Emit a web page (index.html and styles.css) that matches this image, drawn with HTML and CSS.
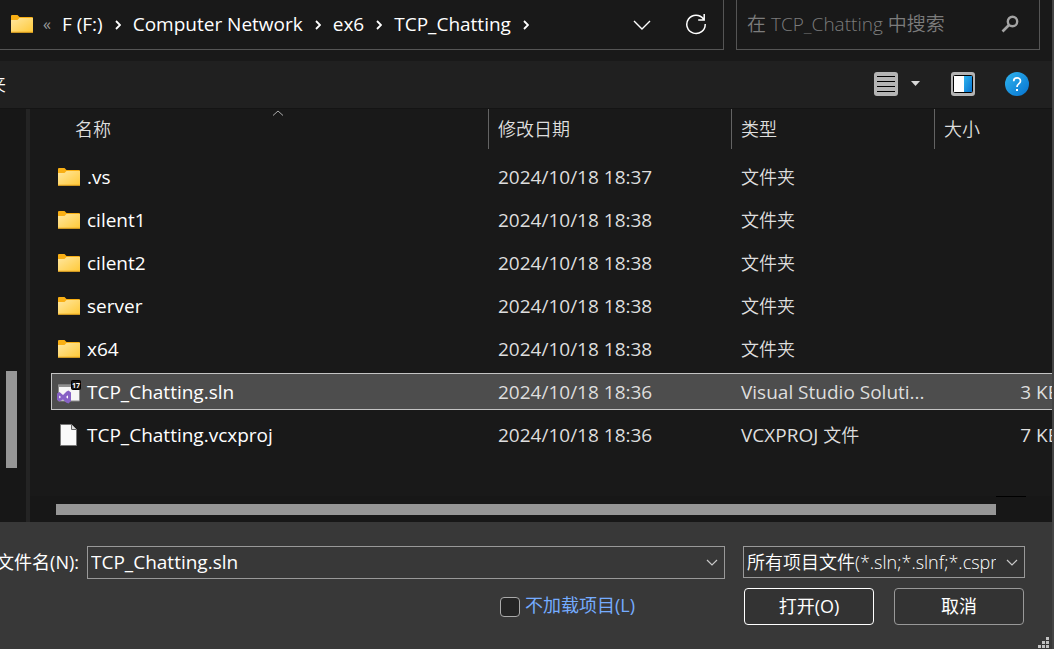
FILE: index.html
```html
<!DOCTYPE html>
<html lang="zh-CN">
<head>
<meta charset="utf-8">
<title>打开项目</title>
<link rel="stylesheet" href="styles.css">
</head>
<body>
<svg class="defs" width="0" height="0" aria-hidden="true">
  <defs>
    <linearGradient id="folder-fill" x1="0" y1="0" x2="1" y2="1">
      <stop offset="0" stop-color="#ffe7a0"/><stop offset="1" stop-color="#ffc938"/>
    </linearGradient>
    <linearGradient id="blue-fill" x1="0" y1="0" x2="1" y2="1">
      <stop offset="0" stop-color="#2fb4ee"/><stop offset="1" stop-color="#0673d0"/>
    </linearGradient>
    <symbol id="folder" viewBox="0 0 22 18">
      <path d="M0 1Q0 0 1 0H6.500L8.500 2H21Q22 2 22 3V9H0Z" fill="#f9af14"/>
      <path d="M0 5H6.500L8.500 3H22V17.500H0Z" fill="url(#folder-fill)"/>
      <path d="M0 17.200H22" stroke="#eda91c"/>
    </symbol>
    <symbol id="crumb" viewBox="0 0 6 10"><path d="M1 1L5 5L1 9" fill="none" stroke="#fff" stroke-width="1.800"/></symbol>
    <symbol id="down" viewBox="0 0 18 10"><path d="M1 1L9 9L17 1" fill="none" stroke="currentColor" stroke-width="1.400"/></symbol>
    <symbol id="down-small" viewBox="0 0 12 7"><path d="M1 1L6 6L11 1" fill="none" stroke="currentColor" stroke-width="1.200"/></symbol>
  </defs>
</svg>
<div class="dialog">
  <header class="top">
    <nav class="address">
      <svg class="folder"><use href="#folder"/></svg>
      <span class="more">«</span>
      <a href="#">F (F:)</a><svg class="sep"><use href="#crumb"/></svg>
      <a href="#">Computer Network</a><svg class="sep"><use href="#crumb"/></svg>
      <a href="#">ex6</a><svg class="sep"><use href="#crumb"/></svg>
      <a href="#">TCP_Chatting</a><svg class="sep"><use href="#crumb"/></svg>
      <button class="icon history" aria-label="以前的位置"><svg width="18" height="10"><use href="#down"/></svg></button>
      <button class="icon" aria-label="刷新">
        <svg width="22" height="22" viewBox="0 0 22 22" fill="none" stroke="#fff" stroke-width="1.500"><path d="M18.500 6A9.200 9.200 0 1 0 20.200 11M19.200 1V7H13.200"/></svg>
      </button>
    </nav>
    <div class="search">
      <input type="search" aria-label="搜索" placeholder="在 TCP_Chatting 中搜索">
      <svg width="18" height="18" viewBox="0 0 18 18" fill="none" stroke="#a3a3a3"><circle cx="11.500" cy="6.500" r="4.700" stroke-width="2.400"/><path d="M8 10L1.500 16.500" stroke-width="2.600"/></svg>
    </div>
  </header>

  <div class="toolbar">
    <button class="new-folder">夹</button>
    <button class="icon view" aria-label="视图">
      <svg width="24" height="24" viewBox="0 0 24 24"><rect width="24" height="24" rx="3" fill="#b4b4b4"/><path d="M3 4.500H21M3 9.500H21M3 14.500H21M3 19.500H21" stroke="#000"/></svg>
      <svg width="9" height="5" viewBox="0 0 9 5"><path d="M0 0H9L4.500 5Z" fill="#d8d8d8"/></svg>
    </button>
    <button class="icon" aria-label="预览窗格">
      <svg width="24" height="24" viewBox="0 0 24 24"><rect width="24" height="24" rx="3" fill="#b4b4b4"/><rect x="2.500" y="3.500" width="19" height="17" rx="1" fill="#fff" stroke="#000"/><path d="M13 4H21V20H13Z" fill="url(#blue-fill)"/></svg>
    </button>
    <button class="icon" aria-label="帮助">
      <svg width="24" height="24" viewBox="0 0 24 24"><circle cx="12" cy="12" r="12" fill="url(#blue-fill)"/><path d="M8.700 9.200C8.700 4.900 15.500 4.900 15.500 9C15.500 11.700 12 11.600 12 15" fill="none" stroke="#fff" stroke-width="1.700"/><rect x="11" y="17" width="2" height="2" fill="#fff"/></svg>
    </button>
  </div>

  <main class="body">
    <aside class="tree"><div class="tree-thumb"></div></aside>
    <section class="files">
      <div class="list">
        <table>
          <colgroup><col><col class="c-date"><col class="c-type"><col class="c-size"></colgroup>
          <thead><tr>
            <th class="name">名称<svg class="sort" width="12" height="6" viewBox="0 0 12 6"><path d="M1 5.500L6 1L11 5.500" fill="none" stroke="#aaa"/></svg></th>
            <th>修改日期</th><th>类型</th><th>大小</th>
          </tr></thead>
          <tbody>
            <tr><td class="name"><svg class="folder"><use href="#folder"/></svg>.vs</td><td>2024/10/18 18:37</td><td class="cjk">文件夹</td><td></td></tr>
            <tr><td class="name"><svg class="folder"><use href="#folder"/></svg>cilent1</td><td>2024/10/18 18:38</td><td class="cjk">文件夹</td><td></td></tr>
            <tr><td class="name"><svg class="folder"><use href="#folder"/></svg>cilent2</td><td>2024/10/18 18:38</td><td class="cjk">文件夹</td><td></td></tr>
            <tr><td class="name"><svg class="folder"><use href="#folder"/></svg>server</td><td>2024/10/18 18:38</td><td class="cjk">文件夹</td><td></td></tr>
            <tr><td class="name"><svg class="folder"><use href="#folder"/></svg>x64</td><td>2024/10/18 18:38</td><td class="cjk">文件夹</td><td></td></tr>
            <tr class="selected"><td class="name"><svg class="file" viewBox="0 0 24 24"><path d="M1.500 5H22.500V21H1.500Z" fill="#f6f6f6" stroke="#8b8b8b"/><path d="M1 4.500H23V7H1Z" fill="#909090"/><path d="M2.500 12L6 15L9.500 11.500L11.500 10.500L14 12.500V21L11.500 23.500L9 22.500L6 19.500L2.500 21.500L0 20V13.500Z" fill="#8661c5"/><path d="M2.200 15.500V18.500L4 17ZM9 17L11 15.300V18.700Z" fill="#fff"/><rect x="14.500" y=".5" width="9" height="9" rx="1" fill="#151515" stroke="#000"/><text class="badge" x="19" y="7.500" text-anchor="middle">17</text></svg>TCP_Chatting.sln</td><td>2024/10/18 18:36</td><td>Visual Studio Soluti...</td><td class="size">3 KB</td></tr>
            <tr><td class="name"><svg class="file" viewBox="0 0 24 24"><path d="M3.500 1.500H14.500L19.500 6.500V22.500H3.500Z" fill="#fafafa" stroke="#777"/><path d="M14.500 1.500V6.500H19.500" fill="#ddd" stroke="#666"/></svg>TCP_Chatting.vcxproj</td><td>2024/10/18 18:36</td><td>VCXPROJ <span class="cjk">文件</span></td><td class="size">7 KB</td></tr>
          </tbody>
        </table>
      </div>
      <div class="hscroll"><div class="hscroll-thumb"></div><div class="hscroll-end"></div></div>
    </section>
  </main>

  <footer class="footer">
    <label class="file-label" for="filename">文件名(N):</label>
    <div class="combo">
      <input id="filename" type="text" value="TCP_Chatting.sln">
      <svg class="arrow" width="12" height="7"><use href="#down-small"/></svg>
    </div>
    <div class="combo filter">
      <select aria-label="文件类型"><option>所有项目文件(*.sln;*.slnf;*.cspr</option></select>
      <svg class="arrow" width="12" height="7"><use href="#down-small"/></svg>
    </div>
    <label class="check"><input type="checkbox">不加载项目(L)</label>
    <div class="actions">
      <button class="default">打开(O)</button>
      <button>取消</button>
    </div>
    <svg class="grip" width="12" height="12" viewBox="0 0 12 12" fill="#c2c2c2"><path d="M8 0h3v3h-3zM4 4h3v3h-3zM8 4h3v3h-3zM0 8h3v3h-3zM4 8h3v3h-3zM8 8h3v3h-3z"/></svg>
  </footer>
</div>
</body>
</html>
```
FILE: styles.css
```css
* { box-sizing: border-box; }

body {
  margin: 0;
  background: #444;
  color: #fff;
  font: 350 18px/24px "Open Sans", "Noto Sans CJK SC", sans-serif;
  overflow: hidden;
}

button, input, select {
  font: inherit;
  color: inherit;
  border-radius: 0;
}

svg { display: block; flex: none; }
.defs { position: absolute; }

.dialog {
  display: flex;
  flex-direction: column;
  min-height: 100vh;
  margin-right: 2px;
  background: #191919;
}

.folder { width: 22px; height: 18px; }

.icon {
  display: flex;
  align-items: center;
  padding: 0;
  border: 0;
  background: none;
}

/* Address bar and search */
.top {
  display: flex;
  gap: 12px;
  height: 61px;
  padding: 0 12px 11px 0;
}

.address {
  display: flex;
  flex: 1;
  align-items: center;
  padding: 0 16px 2px 11px;
  border: solid #555;
  border-width: 0 1px 1px 0;
  font-size: 19px;
  font-weight: 400;
  white-space: nowrap;
}

.address a { color: #fff; text-decoration: none; }
.more { margin: 0 11px 0 10px; font-size: 16px; color: #999; }
.sep { width: 6px; height: 10px; margin: 2px 12px 0; }
.history { margin: 2px 34px 0 auto; }

.search {
  display: flex;
  align-items: center;
  width: 304px;
  padding: 0 20px 2px 10px;
  border: 1px solid #555;
  border-top: 0;
  font-size: 19px;
}

.search input {
  flex: 1;
  min-width: 0;
  padding: 0;
  border: 0;
  outline: 0;
  background: none;
}

.search input::placeholder { color: #7c7c7c; opacity: 1; }

/* Toolbar */
.toolbar {
  display: flex;
  align-items: center;
  gap: 30px;
  height: 48px;
  padding: 0 23px 2px 0;
  background: #202020;
  border-bottom: 1px solid #141414;
}

.new-folder {
  margin: 0 auto 0 -12px;
  padding: 0;
  border: 0;
  background: none;
}

.view { gap: 13px; margin-right: 1px; }

/* Navigation tree and file list */
.body { display: flex; flex: 1; }

.tree {
  width: 30px;
  padding: 262px 8px 0 6px;
  background: #171717;
  border-right: 4px solid #242424;
}

.tree-thumb { width: 11px; height: 97px; background: #969696; }

.files {
  display: flex;
  flex: 1;
  flex-direction: column;
  min-width: 0;
}

.list { flex: 1; padding-left: 21px; overflow: hidden; }

table {
  width: calc(100% + 14px);
  table-layout: fixed;
  border-collapse: separate;
  border-spacing: 0 6px;
  margin-top: -6px;
}

.c-date { width: 243px; }
.c-type { width: 203px; }
.c-size { width: 132px; }

th {
  height: 43px;
  padding: 0 0 3px 10px;
  font-weight: 350;
  text-align: left;
  color: #dedede;
  background: linear-gradient(#636363, #636363) 0 0 / 1px 40px no-repeat;
}

th.name { position: relative; padding-left: 24px; background: none; }
.sort { position: absolute; top: 1px; left: 50%; margin-left: 2px; }

td {
  height: 37px;
  padding: 0 0 0 10px;
  border: solid transparent;
  border-width: 1px 0;
  font-size: 19px;
  font-weight: 400;
  color: #dedede;
  white-space: nowrap;
}

.cjk { font-size: 18px; font-weight: 350; }

td.name { padding-left: 36px; color: #fff; }
td.size { padding: 0 6px 0 0; text-align: right; }
td .folder { float: left; margin: 3px 0 0 -29px; }
td .file { float: left; width: 24px; height: 24px; margin: 0 0 0 -30px; }
.badge { font: 700 7px "Open Sans", sans-serif; fill: #fff; }

.selected td { background: #4d4d4d; border-color: #c4c4c4; }
.selected td.name { border-left: 1px solid #c4c4c4; padding-left: 35px; }

.hscroll {
  display: flex;
  height: 26px;
  padding: 0 26px 0 26px;
  background: #171717;
}

.hscroll-thumb { flex: 1; height: 11px; margin-top: 8px; background: #969696; }
.hscroll-end { width: 30px; height: 1px; background: #000; }

/* File name, filter and actions */
.footer {
  position: relative;
  display: grid;
  grid-template-columns: 79px 1fr 282px;
  align-content: start;
  align-items: start;
  gap: 9px 8px;
  height: 127px;
  padding: 24px 27px 0 0;
  background: #383838;
}

.file-label {
  justify-self: end;
  margin-top: 4px;
  font-weight: 400;
  white-space: nowrap;
}

.combo { display: grid; align-items: center; margin-right: 10px; }
.filter { margin-right: 0; }
.combo > * { grid-area: 1 / 1; }

.combo input, .combo select {
  width: 100%;
  min-width: 0;
  height: 33px;
  padding: 0 28px 2px 3px;
  border: 1px solid #999;
  outline: 0;
  background: #383838;
  appearance: none;
}

.combo input { font-size: 19px; font-weight: 400; }
.combo select { height: 32px; padding-bottom: 0; background: #333; }
.arrow { justify-self: end; margin-right: 7px; color: #c8c8c8; }

.check {
  grid-column: 2;
  justify-self: end;
  display: flex;
  align-items: center;
  gap: 5px;
  margin: 5px 100px 0 0;
  font-weight: 400;
  color: #75acff;
}

.check input {
  appearance: none;
  width: 20px;
  height: 20px;
  margin: 4px 0 0;
  border: 1px solid #aaa;
  border-radius: 4px;
  background: #252525;
}

.actions { display: flex; gap: 20px; padding: 0 1px; }

.actions button {
  flex: 1;
  height: 37px;
  padding: 0 0 2px;
  border: 1px solid #999;
  border-radius: 4px;
  background: #333;
  font-weight: 400;
}

.actions .default { border-color: #fff; }

.grip { position: absolute; right: 2px; bottom: 0; }
```
